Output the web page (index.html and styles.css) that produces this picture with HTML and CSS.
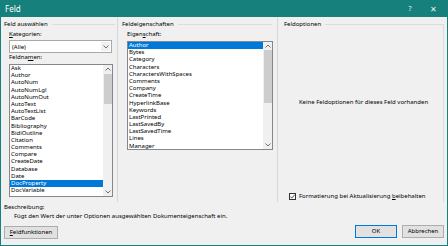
FILE: index.html
```html
<!DOCTYPE html>
<html>
<head>
  <meta charset="UTF-8">
  <title>Feld</title>
  <link rel="stylesheet" href="styles.css">
</head>
<body>
  <div class="window">
    <div class="titlebar">
      <span class="title">Feld</span>
      <span class="tb-btn help">?</span>
      <span class="tb-btn close">✕</span>
    </div>

    <div class="panes">
      <!-- Feld auswählen -->
      <section class="pane pane-select">
        <div class="group-title">Feld auswählen</div>
        <div class="label"><u>K</u>ategorien:</div>
        <div class="combo">
          <span class="combo-text">(Alle)</span>
          <span class="combo-arrow">
            <svg width="6" height="4" viewBox="0 0 6 4"><path d="M0.5 0.5 L3 3 L5.5 0.5" fill="none" stroke="#606060" stroke-width="0.9"/></svg>
          </span>
        </div>
        <div class="label label-names">Feldna<u>m</u>en:</div>
        <div class="listbox names">
          <ul class="items">
            <li>Ask</li>
            <li>Author</li>
            <li>AutoNum</li>
            <li>AutoNumLgl</li>
            <li>AutoNumOut</li>
            <li>AutoText</li>
            <li>AutoTextList</li>
            <li>BarCode</li>
            <li>Bibliography</li>
            <li>BidiOutline</li>
            <li>Citation</li>
            <li>Comments</li>
            <li>Compare</li>
            <li>CreateDate</li>
            <li>Database</li>
            <li>Date</li>
            <li class="selected">DocProperty</li>
            <li>DocVariable</li>
          </ul>
          <div class="scrollbar">
            <span class="sb-arrow">
              <svg width="6" height="4" viewBox="0 0 6 4"><path d="M0.5 3.5 L3 1 L5.5 3.5" fill="none" stroke="#606060" stroke-width="0.9"/></svg>
            </span>
            <span class="sb-thumb thumb-names"></span>
            <span class="sb-space"></span>
            <span class="sb-arrow">
              <svg width="6" height="4" viewBox="0 0 6 4"><path d="M0.5 0.5 L3 3 L5.5 0.5" fill="none" stroke="#606060" stroke-width="0.9"/></svg>
            </span>
          </div>
        </div>
      </section>

      <!-- Feldeigenschaften -->
      <section class="pane pane-props">
        <div class="group-title">Feldeigenschaften</div>
        <div class="label">Eigen<u>s</u>chaft:</div>
        <div class="listbox props">
          <ul class="items">
            <li class="selected">Author</li>
            <li>Bytes</li>
            <li>Category</li>
            <li>Characters</li>
            <li>CharactersWithSpaces</li>
            <li>Comments</li>
            <li>Company</li>
            <li>CreateTime</li>
            <li>HyperlinkBase</li>
            <li>Keywords</li>
            <li>LastPrinted</li>
            <li>LastSavedBy</li>
            <li>LastSavedTime</li>
            <li>Lines</li>
            <li>Manager</li>
          </ul>
          <div class="scrollbar">
            <span class="sb-arrow">
              <svg width="6" height="4" viewBox="0 0 6 4"><path d="M0.5 3.5 L3 1 L5.5 3.5" fill="none" stroke="#606060" stroke-width="0.9"/></svg>
            </span>
            <span class="sb-thumb thumb-props"></span>
            <span class="sb-space"></span>
            <span class="sb-arrow">
              <svg width="6" height="4" viewBox="0 0 6 4"><path d="M0.5 0.5 L3 3 L5.5 0.5" fill="none" stroke="#606060" stroke-width="0.9"/></svg>
            </span>
          </div>
        </div>
      </section>

      <!-- Feldoptionen -->
      <section class="pane pane-options">
        <div class="group-title">Feldoptionen</div>
        <div class="options-box">
          <div class="no-options">Keine Feldoptionen für dieses Feld vorhanden</div>
          <label class="check-row">
            <span class="checkbox">
              <svg width="7" height="7" viewBox="0 0 7 7"><path d="M1.3 3.6 L2.8 5.1 L5.8 1.6" fill="none" stroke="#222" stroke-width="0.8"/></svg>
            </span>
            <span>Formatierung bei Aktualisierung <u>b</u>eibehalten</span>
          </label>
        </div>
      </section>
    </div>

    <div class="description">
      <div class="desc-title">Beschreibung:</div>
      <div class="desc-text">Fügt den Wert der unter Optionen ausgewählten Dokumenteigenschaft ein.</div>
    </div>

    <div class="footer">
      <button class="btn btn-codes"><u>F</u>eldfunktionen</button>
      <div class="footer-right">
        <button class="btn btn-default">OK</button>
        <button class="btn">Abbrechen</button>
      </div>
    </div>
  </div>
</body>
</html>
```

FILE: styles.css
```css
body {
    margin: 0;
    font-family: 'Noto Sans', 'Liberation Sans', sans-serif;
    font-size: 6px;
    color: #000;
    background: #fff;
}
.window {
    width: 448px;
    height: 246px;
    box-sizing: border-box;
    border: 1px solid #16807c;
    border-top: none;
    background: #f0f0f0;
    display: flex;
    flex-direction: column;
}
.titlebar {
    height: 17px;
    margin: 0 -1px;
    background: #16807c;
    color: #fff;
    display: flex;
    align-items: center;
    font-size: 7px;
}
.title {
    flex: 1;
    padding-left: 5px;
    font-size: 8px;
}
.tb-btn {
    width: 22px;
    text-align: center;
    font-size: 7px;
    color: #e8f4f3;
}
.help {
    margin-right: 1px;
}
.close {
    margin-right: 4px;
    font-size: 8px;
}

.panes {
    display: flex;
    height: 185px;
}
.pane {
    display: flex;
    flex-direction: column;
    padding-top: 4px;
    box-sizing: border-box;
    border-right: 1px solid #d7d7d7;
}
.pane-select {
    width: 117px;
    padding-left: 3px;
}
.pane-props {
    width: 160px;
    padding-left: 4px;
}
.pane-options {
    flex: 1;
    padding-left: 6px;
    padding-right: 3px;
    border-right: none;
}
.group-title {
    display: flex;
    align-items: center;
    line-height: 7px;
    height: 7px;
    white-space: nowrap;
}
.group-title::after {
    content: "";
    flex: 1;
    height: 1px;
    margin-left: 4px;
    background: #dcdcdc;
}
.pane-select .group-title {
    margin-right: 2px;
}
.pane-props .group-title {
    margin-right: 5px;
}
.label {
    margin: 3px 0 0 5px;
    line-height: 7px;
    height: 7px;
}
.label-names {
    margin-top: 1px;
}

.combo {
    margin: 2px 0 0 5px;
    width: 103px;
    height: 13px;
    box-sizing: border-box;
    border: 1px solid #a8a8a8;
    background: #fff;
    display: flex;
    align-items: center;
}
.combo-text {
    flex: 1;
    padding-left: 2px;
}
.combo-arrow {
    width: 9px;
    height: 9px;
    margin-right: 1px;
    display: flex;
    align-items: center;
    justify-content: center;
    background: #f0f0f0;
}

.listbox {
    margin: 3px 0 0 5px;
    box-sizing: border-box;
    border: 1px solid #828790;
    background: #fff;
    display: flex;
}
.listbox.names {
    width: 104px;
    height: 133px;
}
.listbox.props {
    width: 146px;
    height: 109px;
}
.items {
    flex: 1;
    list-style: none;
    margin: 0;
    padding: 0;
    overflow: hidden;
}
.items li {
    height: 7.2px;
    line-height: 7.2px;
    padding-left: 1px;
    white-space: nowrap;
}
.items li.selected {
    background: #0078d7;
    color: #fff;
}
.scrollbar {
    width: 9px;
    background: #f0f0f0;
    display: flex;
    flex-direction: column;
    align-items: center;
}
.sb-arrow {
    height: 8px;
    display: flex;
    align-items: center;
    justify-content: center;
}
.sb-thumb {
    width: 8px;
    background: #cdcdcd;
}
.thumb-names {
    margin-top: 1px;
    height: 30px;
}
.thumb-props {
    height: 53px;
}
.sb-space {
    flex: 1;
}

.options-box {
    flex: 1;
    display: flex;
    flex-direction: column;
    border-right: 1px solid #dcdcdc;
    margin-top: -4px;
    padding-bottom: 2px;
}
.no-options {
    margin-top: 75px;
    text-align: center;
    line-height: 7px;
}
.check-row {
    margin-top: auto;
    margin-left: 5px;
    display: flex;
    align-items: center;
    gap: 3px;
    line-height: 7px;
}
.checkbox {
    width: 7px;
    height: 7px;
    box-sizing: border-box;
    border: 1px solid #333;
    background: #fff;
    display: flex;
    align-items: center;
    justify-content: center;
}
.checkbox svg {
    flex: none;
}

.description {
    margin-top: 2px;
    padding-left: 3px;
    line-height: 7px;
}
.desc-text {
    margin-top: 2px;
    padding-left: 10px;
}

.footer {
    margin-top: 6px;
    padding: 0 3px;
    display: flex;
    justify-content: space-between;
    align-items: flex-start;
}
.footer-right {
    display: flex;
    gap: 5px;
    margin-top: -1px;
}
.btn {
    font-family: inherit;
    font-size: 6px;
    height: 13px;
    padding: 0;
    margin: 0;
    border: 1px solid #adadad;
    background: #e1e1e1;
    color: #000;
    line-height: 11px;
}
.btn-codes {
    width: 54px;
}
.footer-right .btn {
    width: 42px;
}
.btn-default {
    border-color: #0078d7;
}
```
